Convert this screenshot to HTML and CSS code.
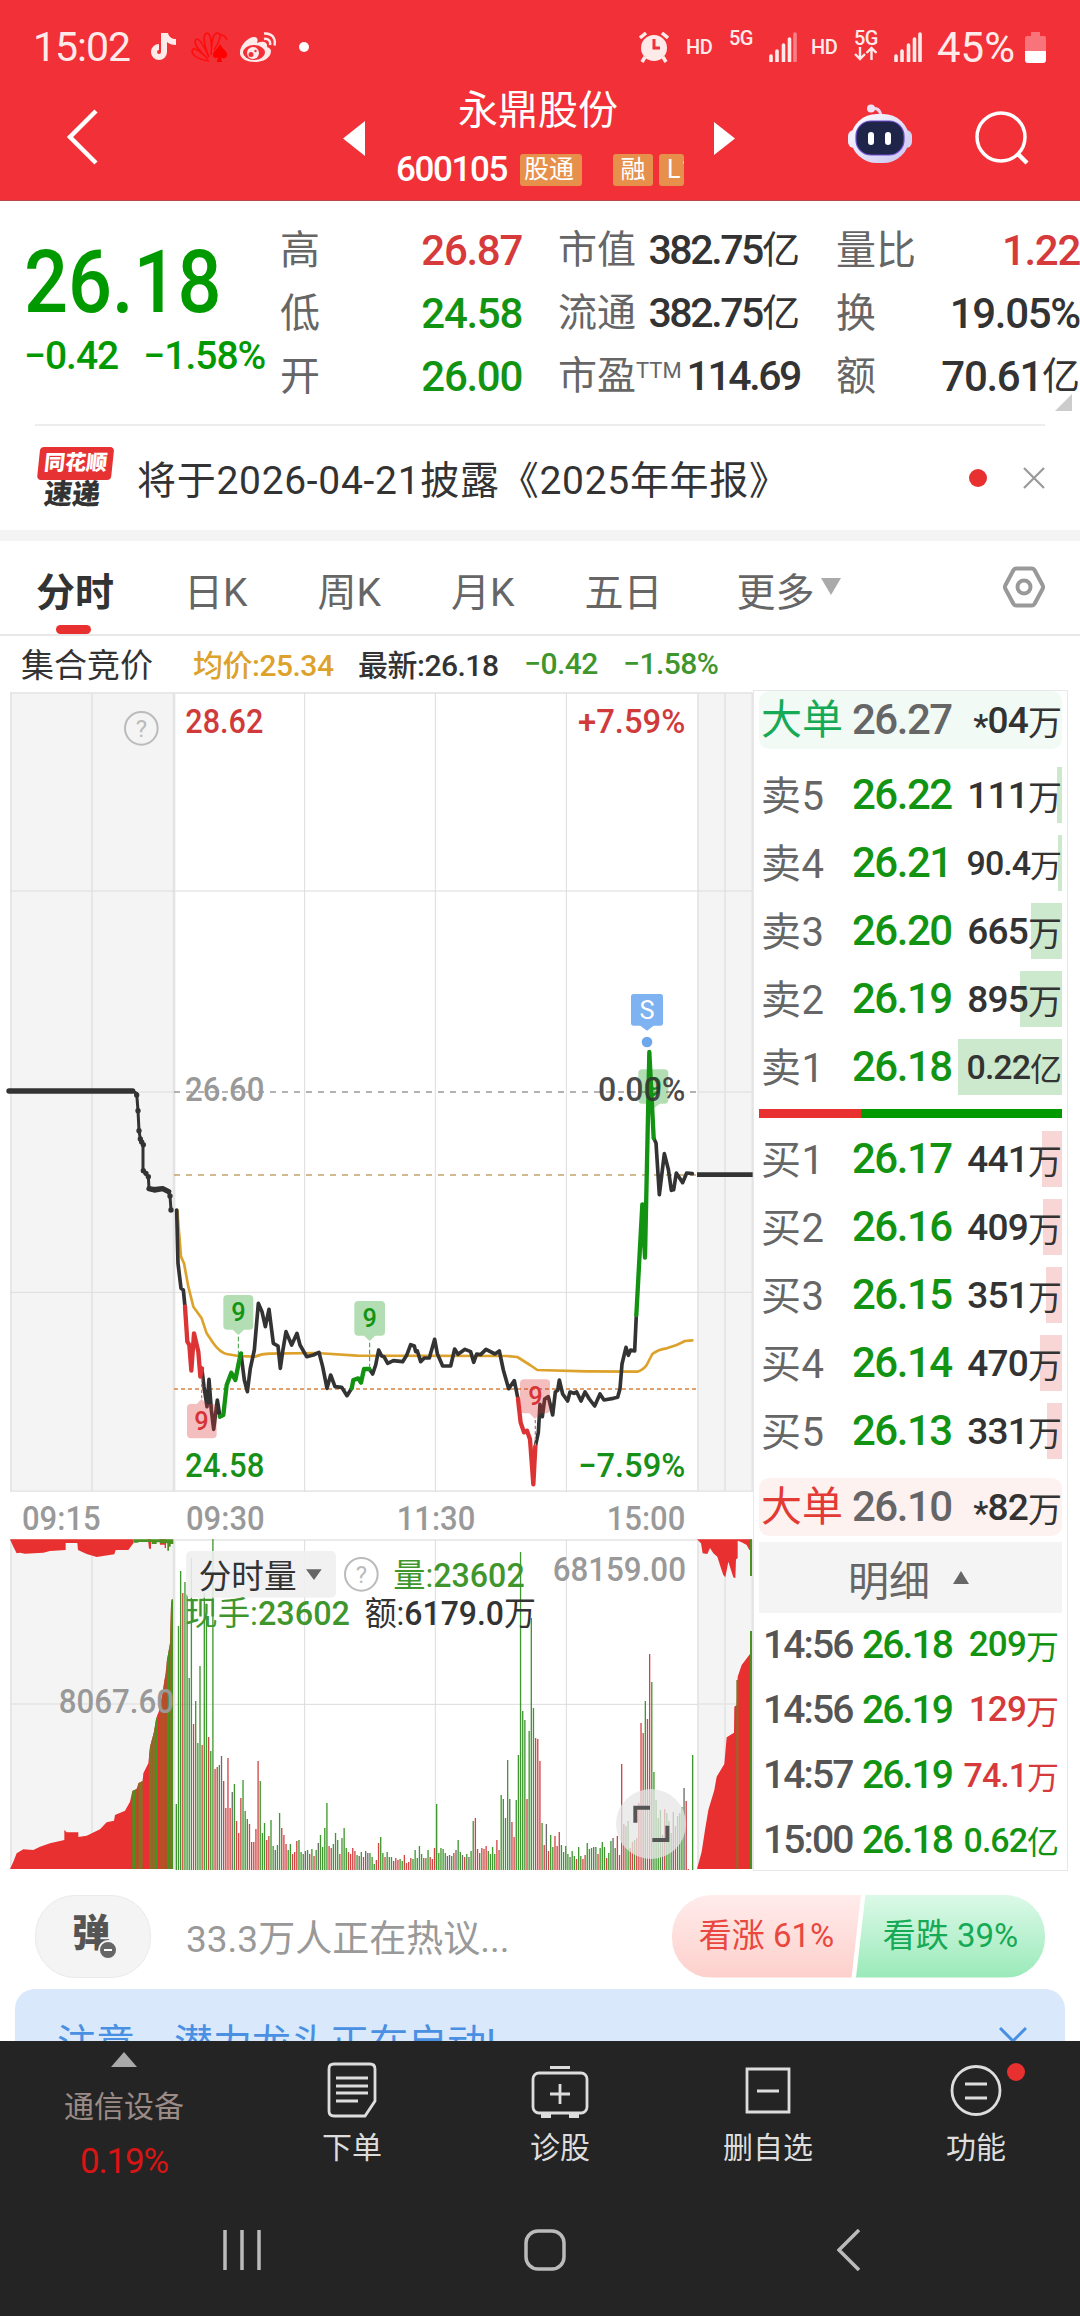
FILE: index.html
```html
<!DOCTYPE html>
<html lang="zh-CN">
<head>
  <meta charset="UTF-8" />
  <title>永鼎股份 600105</title>
  <meta name="viewport" content="width=device-width, initial-scale=1" />
  <link rel="stylesheet" href="styles.css">
</head>
<body>
  <header class="header">
    <div class="status">
      <span class="clock">15:02</span>
      <svg class="tiktok" width="26" height="30" viewBox="0 0 26 30"><path d="M13 1v19a5 5 0 1 1-5-5" fill="none" stroke="#ffeaea" stroke-width="6"/><path d="M13 1h4c1 4 4 6 8 6v6c-4 0-7-1-9-3z" fill="#ffeaea"/></svg>
      <svg class="fan" width="38" height="32" viewBox="0 0 38 32"><g fill="none" stroke="#ff0d0d" stroke-width="1.600"><path d="M18 30C4 28-1 22 2 18c3-1 10 5 15 10C6 18 1 10 6 8c4 0 9 12 12 18C13 14 11 4 16 2c4 0 5 12 4 22C21 12 21 3 26 2c6 0 2 10-3 17M28 3c5 1 7 3 8 6"/></g><path d="M29 13c2 5 8 7 7 12-1 3-5 3-6 1l1 5h-5l1-5c-2 2-5 1-5-2 0-4 5-6 7-11z" fill="#ff0000"/></svg>
      <svg class="weibo" width="37" height="31" viewBox="0 0 37 31"><path d="M1 22C0 14 9 5 15 5c4 0 4 3 3 6 5-2 11-2 10 4 4 1 5 4 3 8-3 5-9 7-15 7-8 0-14-3-15-8z" fill="#ffeaea"/><ellipse cx="15" cy="20.500" rx="11" ry="7.500" fill="#f23037"/><circle cx="14" cy="21" r="6" fill="#ffeaea"/><circle cx="12" cy="22.500" r="2.500" fill="#f23037"/><circle cx="16.500" cy="19" r="1.200" fill="#f23037"/><path d="M25 7c4-1 7 2 6 6M25 1.500c8-1 12 5 10.500 12" fill="none" stroke="#ffeaea" stroke-width="2.500"/></svg>
      <span class="more-dot"></span>
      <svg class="alarm" width="30" height="31" viewBox="0 0 30 31"><circle cx="15" cy="16" r="13" fill="#ffeaea"/><path d="M1 6l6-5M29 6l-6-5M6 25l-3 5M24 25l3 5" stroke="#ffeaea" stroke-width="3.500"/><path d="M15 7v9h6" fill="none" stroke="#f23037" stroke-width="3"/></svg>
      <span class="hd hd-1">HD</span>
      <span class="net net-1">5G</span>
      <svg class="signal" width="28" height="30" viewBox="0 0 28 30"><path d="M2 29v-5M8 29V19M14.500 29V13M20.500 29V7" stroke="#ffeaea" stroke-width="3.600" stroke-linecap="round"/><path d="M26 29V2" stroke="#f98087" stroke-width="3.600" stroke-linecap="round"/></svg>
      <span class="hd hd-2">HD</span>
      <span class="net net-2">5G
        <svg width="24" height="15" viewBox="0 0 24 15"><path d="M6 1v12M1 8l5 5 5-5M17.500 14V2M12.500 7l5-5 5 5" fill="none" stroke="#ffeaea" stroke-width="2.400"/></svg>
      </span>
      <svg class="signal" width="28" height="30" viewBox="0 0 28 30"><path d="M2 29v-5M8 29V19M14.500 29V13M20.500 29V7M26 29V2" stroke="#ffeaea" stroke-width="3.600" stroke-linecap="round"/></svg>
      <span class="percent">45%</span>
      <svg class="battery" width="21" height="31" viewBox="0 0 21 31"><path d="M6 0h9v4h4a2 2 0 0 1 2 2v14H0V6a2 2 0 0 1 2-2h4z" fill="#f8737a"/><path d="M0 19h21v9a3 3 0 0 1-3 3H3a3 3 0 0 1-3-3z" fill="#fff"/></svg>
    </div>
    <div class="titlebar">
      <svg class="back" width="32" height="56" viewBox="0 0 32 56"><path d="M30 2L4 28l26 26" fill="none" stroke="#fff" stroke-width="4.500"/></svg>
      <svg class="prev" width="22" height="35" viewBox="0 0 22 35"><path d="M22 0v35L0 17.500z" fill="#fff"/></svg>
      <div class="stock">
        <div class="stock-name">永鼎股份</div>
        <div class="stock-code">
          <span class="code">600105</span>
          <span class="tag tag-cut">股通</span>
          <span class="tag tag-rong">融</span>
          <span class="tag tag-level">L1</span>
        </div>
      </div>
      <svg class="next" width="21" height="33" viewBox="0 0 21 33"><path d="M0 0v33l21-16.500z" fill="#fff"/></svg>
      <svg class="robot" width="64" height="60" viewBox="0 0 64 60">
        <defs>
          <linearGradient id="shell" x1="0" y1="0" x2="1" y2="1"><stop offset="0" stop-color="#fff"/><stop offset="1" stop-color="#c9c3f0"/></linearGradient>
        </defs>
        <path d="M23 5c6-2 9 1 10 7" fill="none" stroke="#f0d5f0" stroke-width="3"/><circle cx="23" cy="4.500" r="4" fill="#eee0f5"/>
        <rect x="0" y="26" width="12" height="18" rx="6" fill="#f0ecfc"/><rect x="52" y="26" width="12" height="18" rx="6" fill="#d5d0f5"/>
        <rect x="3" y="10" width="58" height="49" rx="26" fill="url(#shell)"/>
        <rect x="8" y="17" width="48" height="34" rx="15" fill="#1e2549" stroke="#6c4ad0" stroke-width="1.200"/>
        <rect x="20" y="28" width="6" height="13" rx="3" fill="#fff"/><rect x="37" y="28" width="6" height="13" rx="3" fill="#fff"/>
      </svg>
      <svg class="search" width="54" height="54" viewBox="0 0 54 54"><circle cx="26" cy="26" r="24" fill="none" stroke="#fff" stroke-width="3.500"/><path d="M42 42l10 10" stroke="#fff" stroke-width="4.500"/></svg>
    </div>
  </header>

  <section class="quote">
    <div class="price">
      <div class="price-now"><span class="squeeze">26.18</span></div>
      <div class="price-change"><span>−0.42</span><span>−1.58%</span></div>
    </div>
    <dl class="stats">
      <dt>高</dt><dd class="up">26.87</dd><dt class="c2">市值</dt><dd class="v2">382.75<i>亿</i></dd><dt class="c3">量比</dt><dd class="up">1.22</dd>
      <dt>低</dt><dd class="down">24.58</dd><dt class="c2">流通</dt><dd class="v2">382.75<i>亿</i></dd><dt class="c3">换</dt><dd>19.05%</dd>
      <dt>开</dt><dd class="down">26.00</dd><dt class="c2">市盈<sup>TTM</sup></dt><dd class="v2">114.69</dd><dt class="c3">额</dt><dd>70.61<i>亿</i></dd>
    </dl>
    <svg class="expand" width="17" height="17" viewBox="0 0 17 17"><path d="M17 0v17H0z" fill="#ccc"/></svg>
  </section>

  <section class="news">
    <div class="news-logo"><b>同花顺</b><em>速递</em></div>
    <p>将于2026-04-21披露《2025年年报》</p>
    <span class="news-dot"></span>
    <svg width="22" height="22" viewBox="0 0 22 22"><path d="M1 1l20 20M21 1L1 21" stroke="#999" stroke-width="2.200"/></svg>
  </section>

  <nav class="tabs">
    <span class="tab active">分时</span>
    <span class="tab">日K</span>
    <span class="tab">周K</span>
    <span class="tab">月K</span>
    <span class="tab">五日</span>
    <span class="tab">更多<svg width="20" height="17" viewBox="0 0 20 17"><path d="M0 0h20L10 17z" fill="#aaa"/></svg></span>
    <svg class="setting" width="42" height="42" viewBox="0 0 42 42"><path d="M13 2.500h16a3 3 0 0 1 2.500 1.500l8 15a4 4 0 0 1 0 4l-8 15a3 3 0 0 1-2.500 1.500H13a3 3 0 0 1-2.500-1.500l-8-15a4 4 0 0 1 0-4l8-15A3 3 0 0 1 13 2.500z" fill="none" stroke="#999" stroke-width="4"/><circle cx="21" cy="21" r="6.500" fill="none" stroke="#999" stroke-width="4"/></svg>
  </nav>

  <div class="legend">
    <span class="l-mode">集合竞价</span>
    <span class="l-avg">均价:25.34</span>
    <span class="l-last">最新:26.18</span>
    <span class="l-diff">−0.42</span>
    <span class="l-rate">−1.58%</span>
  </div>

  <main class="board">
    <div class="charts">
      <svg class="chart" width="754" height="802" viewBox="0 -1080 2262 2406">
        <rect x="31" y="-1071" width="489" height="2397" fill="#f4f4f4"/>
        <rect x="2094" y="-1071" width="163" height="2397" fill="#f4f4f4"/>
        <g stroke="#e4e4e4" stroke-width="5" fill="none">
          <path d="M30-1071H2258M30 1324H2258" stroke="#e8e8e8" stroke-width="6"/>
          <path d="M33-1071V1326M276-1071V1326M2094-1071V1326M2175-1071V1326M2257-1071V1326"/>
          <path d="M522-1071V1326" stroke-width="8"/>
          <path d="M914-1071V1326M1306-1071V1326M1699-1071V1326M30-477H2257M30 727H2257" stroke="#dcdcdc" stroke-width="3"/>
          <path d="M30 126H520M2094 126H2257"/>
        </g>
        <text class="n" x="556" y="-950" textLength="234" lengthAdjust="spacingAndGlyphs" fill="#d03a3a">28.62</text>
        <text class="n" x="1734" y="-950" textLength="322" lengthAdjust="spacingAndGlyphs" fill="#d03a3a">+7.59%</text>
        <text class="n" x="555" y="152" textLength="238" lengthAdjust="spacingAndGlyphs" fill="#999">26.60</text>
        <text class="n" x="555" y="1280" textLength="238" lengthAdjust="spacingAndGlyphs" fill="#169016">24.58</text>
        <text class="n" x="1734" y="1280" textLength="322" lengthAdjust="spacingAndGlyphs" fill="#169016">−7.59%</text>
        <path d="M522 126H2090" stroke="#999" stroke-width="5" stroke-dasharray="18 18"/>
        <path d="M522 375H2090" stroke="#c2a26c" stroke-width="5" stroke-dasharray="18 18"/>
        <path d="M522 1017H2094" stroke="#d88240" stroke-width="5" stroke-dasharray="12 9"/>
        <circle cx="424" cy="-965" r="49" fill="none" stroke="#bbb" stroke-width="6"/>
        <text x="424" y="-939" class="q">?</text>
        <!-- call auction -->
        <g fill="none" stroke="#333" stroke-linejoin="round" stroke-linecap="round">
          <path d="M27 123H398" stroke-width="16"/>
          <path d="M398 123L410 130 414 182 417 242 421 267 429 284 429 362 445 380 447 415 490 415 505 425 510 438 513 480" stroke-width="9"/>
          <path d="M410 135v0M414 182v0M417 242v0M421 267v0M425 276v0M430 284v0M430 362v0M438 370v0M445 380v0M447 416L463 420 488 416 506 425M510 438v0M513 480v0" stroke-width="16"/>
          <path d="M2091 374H2258" stroke-width="14" stroke-linecap="butt"/>
        </g>
        <path d="M532 480L543 620 552 640 565 710 580 770 605 805 620 850 640 880Q660 908 680 912L715 918 765 920Q785 911 810 911L950 909 1070 917 1520 918 1552 921 1590 945 1612 960 1760 964 1912 965Q1930 960 1940 945L1957 912Q1975 898 2000 895L2030 885 2055 873 2077 871" class="line avg"/>
        <path class="line" stroke="#333" d="M530 480L534 640 543 715 550 720 555 770M606 960L612 1010 621 1070 627 988 634 1080 641 1138 652 1050 660 1100M723 912L733 990 742 1025 751 955 763 900 775 760 786 785 796 830 807 778 820 880 834 888 841 955 848 905 858 845 875 885 891 850 900 885 920 920 940 915 957 907 968 950 981 1015 992 975 1005 1010 1025 1012 1041 1037 1055 1015M1108 957L1118 972 1127 945 1136 900 1145 918 1152 920 1163 940 1180 932 1208 935 1220 916 1232 884 1243 888 1247 905 1252 903 1262 935 1273 924 1288 924 1304 868 1312 911 1328 948 1352 948 1364 897 1374 913 1395 898 1412 905 1421 937 1430 912 1442 914 1458 898 1485 912 1498 903 1510 960 1526 1016 1543 992 1554 1047M1606 1190L1615 1147 1620 1063 1627 1100 1634 1047 1645 1040 1658 1095 1666 1026 1673 1021 1678 990 1688 1032 1703 1053 1710 1026 1722 1030 1730 1026 1743 1053 1755 1026 1768 1047 1784 1068 1800 1032 1812 1050 1840 1045 1853 1042 1860 1016 1866 942 1878 892 1885 916 1892 900 1904 903 1909 795M1961 264L1968 279 1978 434 1993 311 2005 358 2014 421 2021 419 2029 369 2048 398 2060 369 2077 371"/>
        <path class="line hot" stroke="#dc3434" d="M555 770L562 875 568 885 574 962 582 850 595 905 601 980 606 955M1554 1047L1562 1118 1572 1147 1581 1142 1590 1168 1600 1303 1606 1190"/>
        <path class="line hot" stroke="#129412" d="M660 1100L670 1095 680 1005 694 968 706 990 718 930 723 910M1055 1015L1060 990 1075 985 1083 998 1092 957 1108 957M1909 795L1927 463 1935 623 1948 6 1961 264"/>
        <!-- nine-turn marks -->
        <g fill="#129412" fill-opacity=".32">
          <path d="M682 735h66a12 12 0 0 1 12 12v80a12 12 0 0 1-12 12h-16l-17 16-17-16h-16a12 12 0 0 1-12-12v-80a12 12 0 0 1 12-12z"/>
          <path d="M1075 753h68a12 12 0 0 1 12 12v80a12 12 0 0 1-12 12h-17l-17 16-17-16h-17a12 12 0 0 1-12-12v-80a12 12 0 0 1 12-12z"/>
          <path d="M1927 58h66a12 12 0 0 1 12 12v79a12 12 0 0 1-12 12h-14l-17 14-17-14h-18a12 12 0 0 1-12-12V70a12 12 0 0 1 12-12z"/>
        </g>
        <g fill="#dc3434" fill-opacity=".32">
          <path d="M573 1062h17l15-15 15 15h18a12 12 0 0 1 12 12v79a12 12 0 0 1-12 12h-65a12 12 0 0 1-12-12v-79a12 12 0 0 1 12-12z"/>
          <path d="M1572 988h66a12 12 0 0 1 12 12v78a12 12 0 0 1-12 12h-16l-17 17-17-17h-16a12 12 0 0 1-12-12v-78a12 12 0 0 1 12-12z"/>
        </g>
        <path d="M715 860V930M1109 878V955" stroke="#3a9a3a" stroke-width="3" stroke-dasharray="14 7"/>
        <path d="M605 985V1045M1606 1110V1190" stroke="#d67070" stroke-width="4" stroke-dasharray="10 7"/>
        <g class="mark">
          <text x="715" y="814" fill="#129412">9</text>
          <text x="1109" y="832" fill="#129412">9</text>
          <text x="1964" y="137" fill="#129412">9</text>
          <text x="604" y="1139" fill="#d63434">9</text>
          <text x="1606" y="1065" fill="#d63434">9</text>
        </g>
        <path d="M1901-168h80a8 8 0 0 1 8 8v79a8 8 0 0 1-8 8h-20l-20 15-20-15h-20a8 8 0 0 1-8-8v-79a8 8 0 0 1 8-8z" fill="#7fb2f0"/>
        <text x="1941" y="-93" class="sell">S</text>
        <circle cx="1941" cy="-24" r="16" fill="#6ea6ec"/>
        <text class="n" x="1794" y="153" textLength="262" lengthAdjust="spacingAndGlyphs" fill="#333" fill-opacity=".88">0.00%</text>
      </svg>
      <svg class="chart" width="754" height="380" viewBox="0 6 2262 1140">
        <g class="axis">
          <text class="n" x="66" y="120" textLength="236" lengthAdjust="spacingAndGlyphs">09:15</text>
          <text class="n" x="558" y="120" textLength="236" lengthAdjust="spacingAndGlyphs">09:30</text>
          <text class="n" x="1190" y="120" textLength="236" lengthAdjust="spacingAndGlyphs">11:30</text>
          <text class="n" x="1820" y="120" textLength="236" lengthAdjust="spacingAndGlyphs">15:00</text>
        </g>
        <rect x="31" y="148" width="489" height="989" fill="#f4f4f4"/>
        <rect x="2094" y="148" width="163" height="989" fill="#f4f4f4"/>
        <g stroke="#e4e4e4" stroke-width="5" fill="none">
          <path d="M30 150H2258M33 150V1137M276 150V1137M2094 150V1137M2175 150V1137M2257 150V1137M30 642H520M2094 642H2257"/>
          <path d="M522 150V1137" stroke-width="8"/>
          <path d="M914 150V1137M1306 150V1137M1699 150V1137M520 643H2094" stroke="#dcdcdc" stroke-width="3"/>
        </g>
        <clipPath id="auction"><path d="M30 1137L40 1115 50 1090 70 1078 100 1080 120 1070 150 1060 193 1050V1020L200 1027H235V1041L260 1037 300 1018 320 997 342 992 345 975 375 962 390 935 397 903 410 897 415 880 428 873 430 850 445 820 450 770 462 725 468 688 478 660 488 610 492 580 497 550 500 515 510 460 513 345 515 328H520V1137z"/></clipPath>
        <g clip-path="url(#auction)">
          <rect x="30" y="300" width="490" height="837" fill="#e83030"/>
          <g fill="#45931f"><path d="M397 300h10v837h-10zM453 300h4v837h-4zM467 300h7v837h-7zM500 300h9v837h-9zM516 300h4v837h-4z"/></g>
          <g fill="#857025"><path d="M415 300h13v837h-13zM447 300h6v837h-6zM457 300h10v837h-10zM509 300h7v837h-7z"/></g>
          <path d="M478 300h19v837h-19zM407 300h4v837h-4z" fill="#b94f27"/>
        </g>
        <path d="M30 148L40 170 50 190 60 188 75 191 130 188 150 183 197 180V159H232L234 180 260 192 290 201 343 193 347 180 385 180 400 160V148zM444 148h9v28h-6zM478 148h20v26h-4v-10h-14z" fill="#e83030"/>
        <path d="M400 148H520V162H512V170H507V182H502V160H480V157H470V162H455V156H415V158H400z" fill="#4c9022"/>
        <path d="M2091 148L2103 160 2108 190 2122 192 2130 174 2140 190 2152 200 2162 232 2170 255 2176 262 2185 215 2200 262 2206 265 2208 208 2213 205V152L2225 157 2240 165 2248 180H2255V148zM2091 1137L2105 1085 2115 1020 2125 960 2143 900 2150 860 2173 822 2180 742 2202 728 2203 650 2210 645 2213 560 2225 525 2250 492 2255 490V1137z" fill="#e83030"/>
        <path d="M2212 570V1137" stroke="#857025" stroke-width="6"/>
        <path d="M2253 148V258M2253 423V1137" stroke="#4c9022" stroke-width="6"/>
        <g id="bars" stroke-width="4"></g>
        <rect x="558" y="183" width="450" height="140" rx="15" fill="#efefef" fill-opacity=".88"/>
        <text class="c" x="596" y="293" textLength="294" lengthAdjust="spacingAndGlyphs" fill="#333">分时量</text>
        <path d="M918 238h47l-23 32z" fill="#666"/>
        <circle cx="1084" cy="253" r="49" fill="none" stroke="#bbb" stroke-width="6"/>
        <text x="1084" y="279" class="q">?</text>
        <text class="c" x="1180" y="290" textLength="394" lengthAdjust="spacingAndGlyphs" fill="#3f962d">量:<tspan class="m">23602</tspan></text>
        <text class="n" x="1658" y="272" textLength="400" lengthAdjust="spacingAndGlyphs" fill="#999">68159.00</text>
        <text class="c" x="556" y="404" textLength="494" lengthAdjust="spacingAndGlyphs" fill="#3f962d">现手:<tspan class="m">23602</tspan></text>
        <text class="c" x="1094" y="404" textLength="514" lengthAdjust="spacingAndGlyphs" fill="#333">额:<tspan class="m">6179.0</tspan>万</text>
        <text class="n" x="176" y="668" textLength="346" lengthAdjust="spacingAndGlyphs" fill="#999">8067.60</text>
        <circle cx="1953" cy="1002" r="105" fill="#e6e6e6" fill-opacity=".75"/>
        <path d="M1906 998V953H1950M1957 1050H2002V1007" fill="none" stroke="#555" stroke-width="12"/>
      </svg>
    </div>

    <aside class="book">
      <div class="big sell-big"><span>大单</span><b>26.27</b><i><em>*</em>04<u>万</u></i></div>
      <div class="orders">
        <div class="order"><span>卖5</span><b>26.22</b><i>111<u>万</u></i><s class="bar-sell" style="width:5px"></s></div>
        <div class="order"><span>卖4</span><b>26.21</b><i class="sm">90.4<u>万</u></i><s class="bar-sell" style="width:4px"></s></div>
        <div class="order"><span>卖3</span><b>26.20</b><i>665<u>万</u></i><s class="bar-sell" style="width:31px"></s></div>
        <div class="order"><span>卖2</span><b>26.19</b><i>895<u>万</u></i><s class="bar-sell" style="width:42px"></s></div>
        <div class="order"><span>卖1</span><b>26.18</b><i class="sm">0.22<u>亿</u></i><s class="bar-sell" style="width:104px"></s></div>
      </div>
      <div class="ratio"></div>
      <div class="orders">
        <div class="order"><span>买1</span><b>26.17</b><i>441<u>万</u></i><s class="bar-buy" style="width:20px"></s></div>
        <div class="order"><span>买2</span><b>26.16</b><i>409<u>万</u></i><s class="bar-buy" style="width:19px"></s></div>
        <div class="order"><span>买3</span><b>26.15</b><i>351<u>万</u></i><s class="bar-buy" style="width:16px"></s></div>
        <div class="order"><span>买4</span><b>26.14</b><i>470<u>万</u></i><s class="bar-buy" style="width:22px"></s></div>
        <div class="order"><span>买5</span><b>26.13</b><i>331<u>万</u></i><s class="bar-buy" style="width:15px"></s></div>
      </div>
      <div class="big buy-big"><span>大单</span><b>26.10</b><i><em>*</em>82<u>万</u></i></div>
      <div class="detail-head">明细<svg width="16" height="13" viewBox="0 0 16 13"><path d="M0 13h16L8 0z" fill="#666"/></svg></div>
      <div class="deal"><span>14:56</span><b>26.18</b><i class="down">209<u>万</u></i></div>
      <div class="deal"><span>14:56</span><b>26.19</b><i class="up">129<u>万</u></i></div>
      <div class="deal"><span>14:57</span><b>26.19</b><i class="up sm">74.1<u>万</u></i></div>
      <div class="deal"><span>15:00</span><b>26.18</b><i class="down sm">0.62<u>亿</u></i></div>
    </aside>
  </main>

  <section class="talk">
    <div class="danmu">弹<svg width="20" height="20" viewBox="0 0 20 20"><circle cx="10" cy="10" r="9" fill="#666" stroke="#f4f4f4" stroke-width="2"/><path d="M6 10h8" stroke="#fff" stroke-width="2"/></svg></div>
    <p>33.3万人正在热议...</p>
    <div class="vote">
      <span class="vote-up">看涨 61%</span>
      <span class="vote-down">看跌 39%</span>
    </div>
  </section>

  <section class="notice">
    <span>注意，潜力龙头正在启动!</span>
    <svg width="28" height="28" viewBox="0 0 28 28"><path d="M1 1l26 26M27 1L1 27" stroke="#4a90e2" stroke-width="3"/></svg>
  </section>

  <footer class="footer">
    <div class="menu">
      <div class="sector">
        <svg width="26" height="15" viewBox="0 0 26 15"><path d="M0 15h26L13 0z" fill="#aaa"/></svg>
        <span class="sector-name">通信设备</span>
        <span class="sector-rate">0.19%</span>
      </div>
      <div class="item">
        <svg width="60" height="60" viewBox="0 0 60 60" class="line-icon"><path d="M12 4h36q5 0 5 5v32L43 56H12q-5 0-5-5V9q0-5 5-5z"/><path d="M14 18h32M14 26h32M14 33h32M14 41h22"/></svg>
        <span>下单</span>
      </div>
      <div class="item">
        <svg width="60" height="60" viewBox="0 0 60 60" class="line-icon"><rect x="3" y="13" width="54" height="40" rx="6"/><path d="M20 7.500h20M30 24v20M20 34h20"/><path d="M11 56h10M39 56h10" stroke-width="4"/></svg>
        <span>诊股</span>
      </div>
      <div class="item">
        <svg width="60" height="60" viewBox="0 0 60 60" class="line-icon"><path d="M9 9h42v43H9zM19 31h22"/></svg>
        <span>删自选</span>
      </div>
      <div class="item">
        <svg width="60" height="60" viewBox="0 0 60 60" class="line-icon"><circle cx="30" cy="30.500" r="24"/><path d="M19 24h22M19 38h22"/></svg>
        <span>功能</span>
        <em class="badge"></em>
      </div>
    </div>
    <div class="sysnav">
      <svg width="40" height="42" viewBox="0 0 40 42"><path d="M2 1v40M19 1v40M36 1v40"/></svg>
      <svg width="42" height="42" viewBox="0 0 42 42"><rect x="2" y="2" width="38" height="38" rx="12"/></svg>
      <svg width="24" height="42" viewBox="0 0 24 42"><path d="M22 1L2 21l20 20"/></svg>
    </div>
  </footer>

  <script src="volume.js"></script>
</body>
</html>
```
FILE: volume.js
```js
// one bar per minute: colour (g / r / k) followed by the bar height
const volumes = `
g66 g244 g299 r277 g288 g276 g192 g312 r146 g169 g127 g204 r125 g277 g252 r133 g119 g331 r101 r103
g105 k114 r89 r62 r112 r62 k78 g86 r49 r37 r72 g90 g59 g51 r46 r28 r28 r41 r109 g89
g37 g47 r30 r34 g50 g24 k20 g25 g57 r42 r35 r26 g20 g26 r16 r18 r29 g30 g18 g16
k19 g20 r16 g21 r14 g20 k27 g35 g23 g42 g67 r24 r22 g26 g37 g30 r16 g32 g42 g22
r18 r16 r22 r19 g15 k14 g18 r13 k19 k17 g17 g13 g6 r10 r27 g33 g17 r13 g18 g13
g13 r9 r12 r10 g11 g9 r15 r7 r8 r12 g11 g20 g12 g24 g16 r12 g12 g20 r13 r11
r22 g66 g17 g22 g21 g17 k14 k15 g14 r17 k20 g30 g18 k15 r13 g16 k13 g19 g49 r52
r21 g17 r22 r21 r24 g19 g16 g23 g16 r30 r20 g75 g71 g52 g110 k71 r48 r33 g70 g115
g318 g159 g150 r71 g139 g252 g162 r132 r131 r109 g47 r25 k46 r19 g35 g23 r34 r24 r38 g25
g18 g24 g16 k13 g19 g14 r11 g23 g14 r11 r15 g27 g21 g22 k23 g23 r16 g22 g28 g23
r12 g17 g29 k32 g22 r34 r15 r106 r46 g44 g49 r22 r28 g30 r32 r67 r147 r137 g169 r151
r216 g188 g98 g70 g52 g60 k35 r61 g57 g49 g37 k58 r44 g54 g57 g63 k82 r69 r1 r0 g115
`.trim().split(/\s+/);

const colors = { g: "#3f982f", r: "#d24444", k: "#6c6c6c" };
const left = 529, right = 2078, base = 1140;
const step = (right - left) / (volumes.length - 1);
const bars = document.getElementById("bars");

volumes.forEach((v, i) => {
  const line = document.createElementNS("http://www.w3.org/2000/svg", "line");
  const x = left + i * step;
  line.setAttribute("x1", x);
  line.setAttribute("x2", x);
  line.setAttribute("y1", base);
  line.setAttribute("y2", base - v.slice(1) * 3);
  line.setAttribute("stroke", colors[v[0]]);
  bars.appendChild(line);
});
```
FILE: styles.css
```css
* { box-sizing: border-box; margin: 0; padding: 0; }
body { width: 1080px; height: 2316px; overflow: hidden; display: flex; flex-direction: column; background: #fff; color: #333; font-family: Roboto, "Noto Sans CJK SC", sans-serif; }
i, em { font-style: normal; }
u, s { text-decoration: none; }
svg { flex: none; display: block; }
.up { color: #d63a3a; }
.down { color: #129412; }

/* header */
.header { height: 201px; flex: none; background: #f23037; color: #fff; border-bottom: 1px solid #b9474d; }
.status { height: 76px; padding: 18px 0 0 33px; display: flex; align-items: center; color: #ffeaea; white-space: nowrap; }
.clock { width: 98px; font-size: 41px; letter-spacing: -1px; }
.tiktok { margin-left: 20px; }
.fan { margin-left: 14px; }
.weibo { margin-left: 10px; }
.more-dot { width: 10px; height: 10px; border-radius: 50%; background: #fff; margin-left: 23px; }
.alarm { margin-left: 330px; }
.hd { font-size: 20px; font-weight: 500; width: 27px; letter-spacing: -0.5px; }
.hd-1 { margin-left: 17px; }
.hd-2 { margin-left: 14px; }
.net { font-size: 20px; font-weight: 500; width: 25px; height: 34px; line-height: 16px; letter-spacing: -0.5px; }
.net-1 { margin: 0 15px 0 16px; }
.net-2 { margin: 0 15px 0 16px; }
.percent { font-size: 42px; letter-spacing: 0; margin-left: 15px; width: 84px; }
.battery { margin-left: 4px; }

.titlebar { height: 124px; display: flex; align-items: center; }
.back { margin: -3px 0 0 66px; }
.prev { margin-left: 245px; }
.stock { width: 288px; margin-left: 31px; padding-bottom: 4px; }
.stock-name { height: 50px; line-height: 50px; font-size: 40px; text-align: center; padding-right: 4px; }
.stock-code { height: 34px; margin-top: 17px; display: flex; align-items: center; overflow: hidden; }
.code { font-size: 35px; font-weight: 500; width: 124px; letter-spacing: -1.4px; }
.tag { height: 32px; line-height: 32px; font-size: 25px; background: #e6904c; border-radius: 3px; text-align: center; flex: none; overflow: hidden; }
.tag-cut { width: 62px; padding-right: 4px; }
.tag-rong { width: 40px; margin-left: 31px; }
.tag-level { width: 25px; margin-left: 6px; padding-left: 8px; text-align: left; letter-spacing: 1px; }
.next { margin-left: 30px; }
.robot { margin: -8px 0 0 113px; }
.search { margin-left: 63px; }

/* quote */
.quote { height: 225px; flex: none; display: flex; position: relative; }
.quote::after { content: ""; position: absolute; left: 35px; right: 35px; bottom: 0; height: 2px; background: #ededed; }
.price { width: 280px; padding-left: 24px; color: #009a00; flex: none; }
.price-now { height: 80px; margin-top: 41px; line-height: 80px; font-size: 88px; font-weight: 500; }
.squeeze { display: inline-block; transform: scaleX(.88); transform-origin: left; }
.price-change { display: flex; gap: 25px; margin-top: 15px; font-size: 39px; font-weight: 500; line-height: 38px; letter-spacing: -1px; white-space: nowrap; }
.stats { width: 800px; display: grid; grid-template-columns: 70px 172px 140px 138px 130px 150px; grid-auto-rows: 63px; padding-top: 18px; line-height: 63px; }
.stats dt { font-size: 40px; color: #666; white-space: nowrap; }
.stats dt.c2 { padding-left: 36px; font-size: 39px; }
.stats dt.c3 { padding-left: 36px; }
.stats dd { font-size: 42px; font-weight: 500; text-align: right; letter-spacing: -1.3px; display: flex; justify-content: flex-end; white-space: nowrap; }
.stats dd.v2 { font-size: 41px; letter-spacing: -2.4px; }
.stats dd i { font-weight: 400; font-size: 38px; letter-spacing: 0; }
.stats sup { font-size: 22px; line-height: 0; vertical-align: 11px; }
.expand { position: absolute; right: 8px; bottom: 15px; }

/* news */
.news { height: 104px; flex: none; display: flex; align-items: center; padding: 0 35px 0 37px; }
.news-logo { width: 74px; display: flex; flex-direction: column; align-items: center; transform: skewX(-6deg); }
.news-logo b { width: 74px; height: 33px; line-height: 32px; background: #e63232; border-radius: 4px; color: #fff; font-size: 21px; font-weight: 900; text-align: center; }
.news-logo em { font-size: 28px; font-weight: 900; line-height: 30px; }
.news p { margin: -3px 0 0 26px; font-size: 39px; width: 700px; white-space: nowrap; letter-spacing: 0.7px; }
.news-dot { width: 18px; height: 18px; border-radius: 50%; background: #e83030; margin: 0 36px 0 auto; }

/* tabs */
.tabs { height: 106px; flex: none; border-top: 11px solid #f4f4f4; border-bottom: 2px solid #e8e8e8; display: flex; align-items: center; padding: 3px 35px 0 36px; font-size: 39px; color: #666; }
.tab { position: relative; display: flex; align-items: center; height: 90px; margin-right: 70px; white-space: nowrap; }
.tab:nth-child(5) { margin-right: 74px; }
.tab svg { margin: -5px 0 0 6px; }
.tab.active { color: #333; font-weight: 700; }
.tab.active::after { content: ""; position: absolute; left: 20px; bottom: 0; width: 35px; height: 9px; border-radius: 5px; background: #e83030; }
.setting { margin: -4px 0 0 auto; }
.tab:nth-child(6) { margin-right: 0; }

.legend { height: 54px; flex: none; display: flex; align-items: center; font-size: 30px; font-weight: 500; letter-spacing: -0.5px; white-space: nowrap; }
.l-mode { width: 172px; margin-left: 21px; font-size: 33px; font-weight: 400; letter-spacing: 0; }
.l-avg { width: 165px; color: #dda22c; }
.l-last { width: 166px; }
.l-diff { width: 99px; color: #3f962d; }
.l-rate { color: #3f962d; }

/* charts */
.board { height: 1182px; flex: none; display: flex; }
.charts { width: 753px; flex: none; }
.n { font: 500 101px Roboto, sans-serif; }
.c { font: 400 98px Roboto, "Noto Sans CJK SC", sans-serif; }
.m { font-weight: 500; }
.q { font: 400 72px Roboto, sans-serif; fill: #bbb; text-anchor: middle; }
.axis { fill: #999; }
.line { fill: none; stroke-width: 11px; stroke-linejoin: round; stroke-linecap: round; }
.line.avg { stroke: #dda22c; stroke-width: 8px; }
.line.hot { stroke-width: 13px; }
.mark { font: 500 76px Roboto, sans-serif; text-anchor: middle; }
.sell { font: 400 76px Roboto, sans-serif; fill: #fff; text-anchor: middle; }

/* order book */
.book { width: 315px; height: 1181px; border: 1px solid #e8e8e8; padding: 0 5px; }
.big, .order, .deal { display: grid; grid-template-columns: 91px 108px 1fr; align-items: center; padding-left: 2px; position: relative; white-space: nowrap; }
.big { height: 58px; border-radius: 10px; }
.big span { font-size: 41px; line-height: 56px; }
.big b, .order b { font-size: 42px; font-weight: 500; letter-spacing: -1.5px; padding-bottom: 2px; }
.big b { color: #666; }
.book i { display: flex; align-items: center; justify-content: flex-end; font-size: 37px; font-weight: 500; letter-spacing: -0.8px; }
.book i em { font-size: 34px; padding-top: 11px; }
.book u { font-size: 34px; font-weight: 400; letter-spacing: 0; }
.book i.sm { font-size: 34px; letter-spacing: -1px; }
.book .sm u { font-size: 32px; }
.sell-big { background: #f1faf5; }
.sell-big span { color: #16a956; }
.buy-big { background: #fef2f1; margin-top: 13px; }
.buy-big span { color: #e23a34; }
.orders { margin-top: 12px; }
.ratio { height: 9px; margin-top: 8px; background: linear-gradient(to right, #e83030 102px, #009a00 102px); }
.ratio + .orders { margin-top: 7px; }
.order { height: 68px; }
.order span { font-size: 40px; color: #666; padding-bottom: 5px; letter-spacing: 0.5px; }
.order b { color: #129412; }
.order s { position: absolute; right: 0; top: 6px; height: 56px; z-index: -1; }
.bar-sell { background: #cde9cd; }
.bar-buy { background: #f9d6d6; }
.detail-head { height: 71px; margin-top: 6px; background: #f4f4f4; color: #666; font-size: 41px; display: flex; align-items: center; justify-content: center; gap: 23px; padding-right: 4px; }
.deal { height: 65px; grid-template-columns: 99px 96px 1fr; padding: 0 3px 2px 4px; font-size: 39px; }
.deal span { color: #555; letter-spacing: -1.9px; font-weight: 500; }
.deal b { color: #129412; font-weight: 500; letter-spacing: -1.9px; }
.deal i { font-size: 35px; }
.deal u { font-size: 33px; }

/* discussion */
.talk { height: 117px; flex: none; display: flex; align-items: center; padding: 11px 35px 0; }
.danmu { width: 116px; height: 83px; border-radius: 40px; border: 1px solid #eaeaea; background: #f4f4f4; display: flex; align-items: center; justify-content: center; font-size: 38px; line-height: 60px; font-weight: 900; color: #555; padding: 0 0 6px 4px; }
.danmu svg { margin: 34px 0 0 -12px; }
.talk p { margin-left: 35px; font-size: 37px; color: #999; }
.vote { width: 373px; height: 83px; margin-left: auto; display: flex; border-radius: 40px; overflow: hidden; font-size: 33px; line-height: 82px; text-align: center; white-space: nowrap; }
.vote-up { width: 189px; background: linear-gradient(#ffeceb, #fdd0cc); color: #e8483f; clip-path: polygon(0 0, 100% 0, 95% 100%, 0 100%); }
.vote-down { width: 189px; margin-left: -5px; background: linear-gradient(#dcf9e8, #9aeab9); color: #16a956; clip-path: polygon(5% 0, 100% 0, 100% 100%, 0 100%); }

.notice { height: 52px; flex: none; margin: 0 15px; background: #d9e8fb; border-radius: 20px 20px 0 0; display: flex; justify-content: space-between; align-items: flex-start; padding: 38px 38px 0 42px; overflow: hidden; font-size: 39px; line-height: 39px; color: #4a90e2; }
.notice span { margin-top: -2px; }

/* bottom */
.footer { flex: 1; background: #242424; color: #ddd; }
.menu { display: flex; height: 160px; }
.sector { width: 248px; display: flex; flex-direction: column; align-items: center; padding-top: 11px; }
.sector-name { font-size: 30px; line-height: 40px; margin-top: 20px; color: #9b8b86; }
.sector-rate { font-size: 35px; line-height: 40px; margin-top: 15px; color: #d81414; letter-spacing: -1.2px; }
.item { width: 208px; position: relative; display: flex; flex-direction: column; align-items: center; padding-top: 19px; font-size: 30px; }
.item span { line-height: 40px; margin-top: 8px; }
.line-icon { fill: none; stroke: #ddd; stroke-width: 2.8px; }
.badge { position: absolute; top: 22px; left: 135px; width: 18px; height: 18px; border-radius: 50%; background: #e83030; }
.sysnav { display: flex; align-items: center; height: 98px; padding-left: 223px; }
.sysnav svg { fill: none; stroke: #bbb; stroke-width: 3.5px; }
.sysnav svg + svg { margin-left: 261px; }
.sysnav svg:last-child { margin-left: 271px; }
```
